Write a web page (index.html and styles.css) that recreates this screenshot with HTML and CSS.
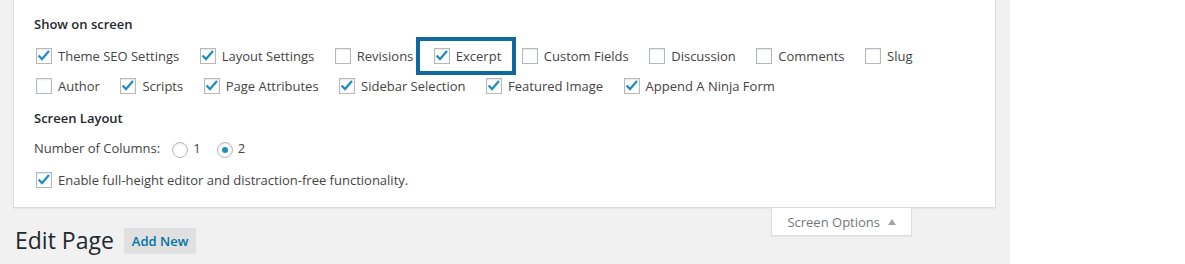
FILE: index.html
```html
<!DOCTYPE html>
<html lang="en">
<head>
  <meta charset="UTF-8" />
  <title>Edit Page</title>
  <link rel="stylesheet" href="styles.css">
</head>
<body>
  <div class="page">
    <div class="screen-meta">
      <h5 class="section-title">Show on screen</h5>

      <div class="prefs-row">
        <label class="pref"><span class="box on"><svg viewBox="1 1 14 14" width="14" height="14"><path d="M2.6 7.4 L6 11 L13 3" /></svg></span>Theme SEO Settings</label>
        <label class="pref"><span class="box on"><svg viewBox="1 1 14 14" width="14" height="14"><path d="M2.6 7.4 L6 11 L13 3" /></svg></span>Layout Settings</label>
        <label class="pref"><span class="box"></span>Revisions</label>
        <label class="pref highlight"><span class="box on"><svg viewBox="1 1 14 14" width="14" height="14"><path d="M2.6 7.4 L6 11 L13 3" /></svg></span>Excerpt</label>
        <label class="pref"><span class="box"></span>Custom Fields</label>
        <label class="pref"><span class="box"></span>Discussion</label>
        <label class="pref"><span class="box"></span>Comments</label>
        <label class="pref"><span class="box"></span>Slug</label>
      </div>
      <div class="prefs-row">
        <label class="pref"><span class="box"></span>Author</label>
        <label class="pref"><span class="box on"><svg viewBox="1 1 14 14" width="14" height="14"><path d="M2.6 7.4 L6 11 L13 3" /></svg></span>Scripts</label>
        <label class="pref"><span class="box on"><svg viewBox="1 1 14 14" width="14" height="14"><path d="M2.6 7.4 L6 11 L13 3" /></svg></span>Page Attributes</label>
        <label class="pref"><span class="box on"><svg viewBox="1 1 14 14" width="14" height="14"><path d="M2.6 7.4 L6 11 L13 3" /></svg></span>Sidebar Selection</label>
        <label class="pref"><span class="box on"><svg viewBox="1 1 14 14" width="14" height="14"><path d="M2.6 7.4 L6 11 L13 3" /></svg></span>Featured Image</label>
        <label class="pref"><span class="box on"><svg viewBox="1 1 14 14" width="14" height="14"><path d="M2.6 7.4 L6 11 L13 3" /></svg></span>Append A Ninja Form</label>
      </div>

      <h5 class="section-title layout-title">Screen Layout</h5>

      <div class="columns-row">
        <span class="columns-label">Number of Columns:</span>
        <label class="radio-opt"><span class="radio"></span>1</label>
        <label class="radio-opt"><span class="radio checked"></span>2</label>
      </div>

      <div class="prefs-row editor-row">
        <label class="pref"><span class="box on"><svg viewBox="1 1 14 14" width="14" height="14"><path d="M2.6 7.4 L6 11 L13 3" /></svg></span>Enable full-height editor and distraction-free functionality.</label>
      </div>
    </div>

    <div class="meta-links">
      <button class="meta-toggle">Screen Options <span class="arrow"></span></button>
    </div>

    <h1 class="page-title">Edit Page <a class="add-new">Add New</a></h1>
  </div>
</body>
</html>
```

FILE: styles.css
```css
body {
  margin: 0;
  background: #fff;
  font-family: "Open Sans", sans-serif;
  font-size: 13px;
  color: #444;
}

.page {
  width: 1010px;
  height: 264px;
  background: #f1f1f1;
  overflow: hidden;
}

.screen-meta {
  margin-left: 13px;
  width: 983px;
  box-sizing: border-box;
  background: #fff;
  border: 1px solid #ddd;
  border-top: 0;
  box-shadow: 0 1px 1px rgba(0,0,0,0.04);
  padding: 14px 20px 12px 20px;
}

.section-title {
  margin: 0;
  font-size: 13px;
  font-weight: 600;
  line-height: 20px;
  color: #23282d;
}

.prefs-row {
  display: flex;
  height: 30px;
  margin-left: 2px;
}

.prefs-row:first-of-type {
  margin-top: 7px;
}

.pref {
  display: flex;
  align-items: center;
  margin-right: 20.5px;
  white-space: nowrap;
}

.box {
  width: 16px;
  height: 16px;
  box-sizing: border-box;
  border: 1px solid #b4b9be;
  background: #fff;
  box-shadow: inset 0 1px 2px rgba(0,0,0,0.1);
  margin-right: 6px;
  display: flex;
  align-items: center;
  justify-content: center;
}

.box svg path {
  fill: none;
  stroke: #1e8cbe;
  stroke-width: 2.2;
}

.highlight {
  position: relative;
}

.highlight::after {
  content: "";
  position: absolute;
  left: -18px;
  right: -15px;
  top: -4px;
  bottom: -4px;
  border: 4px solid #1068a3;
  pointer-events: none;
}

.layout-title {
  margin-top: 7px;
}

.columns-row {
  display: flex;
  align-items: center;
  height: 26px;
  margin-top: 7px;
}

.columns-label {
  margin-right: 12px;
}

.radio-opt {
  display: flex;
  align-items: center;
  margin-right: 16px;
}

.radio {
  width: 16px;
  height: 16px;
  box-sizing: border-box;
  border: 1px solid #b4b9be;
  border-radius: 50%;
  box-shadow: inset 0 1px 2px rgba(0,0,0,0.1);
  margin: 4px 5px 0 0;
  display: flex;
  align-items: center;
  justify-content: center;
}

.radio.checked::before {
  content: "";
  width: 6px;
  height: 6px;
  border-radius: 50%;
  background: #1e8cbe;
}

.editor-row {
  margin-top: 4px;
}

.meta-links {
  float: right;
  margin-right: 98px;
}

.meta-toggle {
  font-family: "Open Sans", sans-serif;
  font-size: 13px;
  color: #72777c;
  background: #fff;
  border: 1px solid #ddd;
  border-top: 0;
  height: 28px;
  padding: 0 15px 0 15px;
  box-shadow: 0 1px 1px rgba(0,0,0,0.04);
  display: flex;
  align-items: center;
}

.arrow {
  width: 0;
  height: 0;
  margin-left: 8px;
  border-left: 4px solid transparent;
  border-right: 4px solid transparent;
  border-bottom: 6px solid #a0a5aa;
}

.page-title {
  display: flex;
  align-items: center;
  margin: 18px 0 0 15px;
  font-size: 23px;
  font-weight: 400;
  line-height: 29px;
  color: #23282d;
}

.add-new {
  margin-left: 10px;
  padding: 4px 8px;
  font-size: 13px;
  font-weight: 600;
  line-height: 18px;
  color: #0073aa;
  background: #e0e0e0;
  border-radius: 2px;
}
```
